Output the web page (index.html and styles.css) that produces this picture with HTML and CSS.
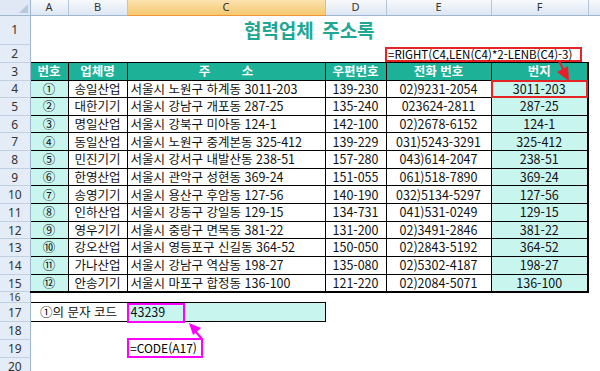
FILE: index.html
```html
<!DOCTYPE html>
<html lang="ko">
<head>
<meta charset="utf-8">
<title>협력업체 주소록</title>
<link rel="stylesheet" href="styles.css">
</head>
<body>
<div class="sheet">
<table class="grid">
<colgroup><col class="c-rh"><col class="c-a"><col class="c-b"><col class="c-c"><col class="c-d"><col class="c-e"><col class="c-f"><col class="c-g"></colgroup>
<tr class="hdr"><th class="corner"><span class="tri"></span></th><th>A</th><th>B</th><th class="sel">C</th><th>D</th><th>E</th><th>F</th><th></th></tr>
<tr class="r1"><th class="rh">1</th><td colspan="6" class="title">협력업체 주소록</td><td></td></tr>
<tr class="r2"><th class="rh">2</th><td colspan="6"></td><td></td></tr>
<tr class="r3 t"><th class="rh">3</th><td class="h first">번호</td><td class="h">업체명</td><td class="h">주&nbsp;&nbsp;&nbsp;&nbsp;&nbsp;&nbsp;&nbsp;&nbsp;&nbsp;소</td><td class="h">우편번호</td><td class="h">전화 번호</td><td class="h last">번지</td><td class="g"></td></tr>
<tr class="d t"><th class="rh">4</th><td class="no first">①</td><td class="cn">송일산업</td><td class="ad">서울시 노원구 하계동 3011-203</td><td class="cn">139-230</td><td class="cn">02)9231-2054</td><td class="bj last sel-red">3011-203</td><td class="g"></td></tr>
<tr class="d t"><th class="rh">5</th><td class="no first">②</td><td class="cn">대한기기</td><td class="ad">서울시 강남구 개포동 287-25</td><td class="cn">135-240</td><td class="cn">023624-2811</td><td class="bj last">287-25</td><td class="g"></td></tr>
<tr class="d t"><th class="rh">6</th><td class="no first">③</td><td class="cn">명일산업</td><td class="ad">서울시 강북구 미아동 124-1</td><td class="cn">142-100</td><td class="cn">02)2678-6152</td><td class="bj last">124-1</td><td class="g"></td></tr>
<tr class="d t"><th class="rh">7</th><td class="no first">④</td><td class="cn">동일산업</td><td class="ad">서울시 노원구 중계본동 325-412</td><td class="cn">139-229</td><td class="cn">031)5243-3291</td><td class="bj last">325-412</td><td class="g"></td></tr>
<tr class="d t"><th class="rh">8</th><td class="no first">⑤</td><td class="cn">민진기기</td><td class="ad">서울시 강서구 내발산동 238-51</td><td class="cn">157-280</td><td class="cn">043)614-2047</td><td class="bj last">238-51</td><td class="g"></td></tr>
<tr class="d t"><th class="rh">9</th><td class="no first">⑥</td><td class="cn">한영산업</td><td class="ad">서울시 관악구 성현동 369-24</td><td class="cn">151-055</td><td class="cn">061)518-7890</td><td class="bj last">369-24</td><td class="g"></td></tr>
<tr class="d t"><th class="rh">10</th><td class="no first">⑦</td><td class="cn">송영기기</td><td class="ad">서울시 용산구 후암동 127-56</td><td class="cn">140-190</td><td class="cn">032)5134-5297</td><td class="bj last">127-56</td><td class="g"></td></tr>
<tr class="d t"><th class="rh">11</th><td class="no first">⑧</td><td class="cn">인하산업</td><td class="ad">서울시 강동구 강일동 129-15</td><td class="cn">134-731</td><td class="cn">041)531-0249</td><td class="bj last">129-15</td><td class="g"></td></tr>
<tr class="d t"><th class="rh">12</th><td class="no first">⑨</td><td class="cn">영우기기</td><td class="ad">서울시 중랑구 면목동 381-22</td><td class="cn">131-200</td><td class="cn">02)3491-2846</td><td class="bj last">381-22</td><td class="g"></td></tr>
<tr class="d t"><th class="rh">13</th><td class="no first">⑩</td><td class="cn">강오산업</td><td class="ad">서울시 영등포구 신길동 364-52</td><td class="cn">150-050</td><td class="cn">02)2843-5192</td><td class="bj last">364-52</td><td class="g"></td></tr>
<tr class="d t"><th class="rh">14</th><td class="no first">⑪</td><td class="cn">가나산업</td><td class="ad">서울시 강남구 역삼동 198-27</td><td class="cn">135-080</td><td class="cn">02)5302-4187</td><td class="bj last">198-27</td><td class="g"></td></tr>
<tr class="d t lastrow"><th class="rh">15</th><td class="no first">⑫</td><td class="cn">안송기기</td><td class="ad">서울시 마포구 합정동 136-100</td><td class="cn">121-220</td><td class="cn">02)2084-5071</td><td class="bj last">136-100</td><td class="g"></td></tr>
<tr class="r16"><th class="rh small">16</th><td colspan="6"></td><td></td></tr>
<tr class="r17"><th class="rh">17</th><td colspan="2" class="lbl">①의 문자 코드</td><td class="code">43239</td><td colspan="3"></td><td></td></tr>
<tr class="r18"><th class="rh">18</th><td colspan="6"></td><td></td></tr>
<tr class="r19"><th class="rh">19</th><td colspan="6"></td><td></td></tr>
<tr class="r20"><th class="rh">20</th><td colspan="6"></td><td></td></tr>
</table>

<div class="formula-box">=RIGHT(C4,LEN(C4)*2-LENB(C4)-3)</div>
<div class="code-mark"></div>
<div class="code-box">=CODE(A17)</div>

<svg class="arrows" width="600" height="371" viewBox="0 0 600 371">
  <line x1="559" y1="61" x2="564" y2="71" stroke="#e8202a" stroke-width="2"/>
  <polygon points="569,81 557,72 568,66" fill="#e8202a"/>
  <line x1="202" y1="339" x2="195" y2="331" stroke="#ff00ff" stroke-width="2"/>
  <polygon points="189,323 201,328 193,335" fill="#ff00ff"/>
</svg>
</div>
</body>
</html>
```

FILE: styles.css
```css
* { box-sizing: border-box; }
html, body { margin: 0; padding: 0; background: #fff; }
body {
  width: 600px;
  height: 371px;
  overflow: hidden;
  font-family: "Noto Sans CJK KR", "Noto Sans", sans-serif;
}
.sheet { position: relative; width: 600px; height: 371px; overflow: hidden; }

.grid {
  border-collapse: collapse;
  table-layout: fixed;
  width: 612px;
}
.c-rh { width: 30px; }
.c-a { width: 38px; }
.c-b { width: 59px; }
.c-c { width: 198px; }
.c-d { width: 61px; }
.c-e { width: 105px; }
.c-f { width: 97px; }
.c-g { width: 24px; }

.grid th, .grid td {
  padding: 0;
  white-space: nowrap;
  font-size: 12.5px;
  line-height: 1;
  vertical-align: middle;
}

/* column header */
.hdr { height: 15px; }
.grid .hdr th {
  font-family: "Noto Sans", sans-serif;
  font-weight: normal;
  font-size: 11px;
  line-height: 12px;
  color: #333;
  background: linear-gradient(#f7f9fc, #dde6f2);
  border-right: 1px solid #b4c6da;
  border-bottom: 1px solid #9eb6ce;
}
.grid .hdr th.sel {
  background: linear-gradient(#fbe2b0, #f5c86e);
  border-bottom: 1px solid #f29536;
  border-right: 1px solid #f0b860;
}
.grid .hdr th.corner {
  position: relative;
  background: #dfe8f4;
  border-right: 1px solid #9eb6ce;
}
.tri {
  position: absolute;
  right: 2px;
  bottom: 2px;
  width: 0;
  height: 0;
  border-left: 9px solid transparent;
  border-bottom: 9px solid #b8c9dc;
}

/* row header */
.grid .rh {
  font-family: "Noto Sans", sans-serif;
  font-weight: normal;
  font-size: 12px;
  line-height: 11px;
  color: #333;
  background: #e4ecf7;
  border-right: 1px solid #9eb6ce;
  border-bottom: 1px solid #c0d0e2;
  text-align: center;
}
.grid .rh.small { font-size: 10px; line-height: 8px; }

/* row heights */
.r1 { height: 29px; }
.r2 { height: 18px; }
.r3 { height: 18px; }
.d { height: 17.67px; }
.r16 { height: 11px; }
.r17 { height: 19px; }
.r18 { height: 18px; }
.r19 { height: 18px; }
.r20 { height: 18px; }

.grid .title {
  text-align: center;
  font-size: 19px;
  font-weight: bold;
  color: #1ea893;
  word-spacing: 3px;
}

/* table */
.t td { border: 1px solid #000; }
.t td.g { border: none; border-left: 1px solid #000; }
.t td.last { border-right: 2px solid #000; }
.t.lastrow td { border-bottom: 2px solid #000; }
.t.lastrow td.g { border-bottom: none; }

.grid .h {
  background: #1db198;
  color: #fff;
  font-weight: bold;
  text-align: center;
}
.no {
  background: #c9f5ef;
  text-align: center;
  color: #111;
}
.cn { text-align: center; color: #111; }
.grid .ad { text-align: left; padding-left: 3px; color: #111; }
.bj { background: #c9f5ef; text-align: center; color: #111; }
.sel-red { outline: 2px solid #e52525; outline-offset: -2px; }

/* row 17 */
.r17 td.lbl {
  text-align: center;
  border-top: 1px solid #000;
  border-bottom: 1px solid #000;
  color: #111;
}
.grid .r17 td.code {
  background: #c9f5ef;
  border: 1px solid #000;
  padding-left: 3px;
  color: #111;
}

/* floating shapes */
.formula-box {
  position: absolute;
  left: 385px;
  top: 47px;
  width: 197px;
  height: 15px;
  border: 2px solid #e52525;
  background: #fff;
  font-size: 11.5px;
  line-height: 11px;
  padding-left: 1px;
  color: #000;
  white-space: nowrap;
}
.code-mark {
  position: absolute;
  left: 127px;
  top: 303px;
  width: 58px;
  height: 20px;
  border: 2px solid #ff00ff;
}
.code-box {
  position: absolute;
  left: 127px;
  top: 338px;
  width: 76px;
  height: 20px;
  border: 2px solid #ff00ff;
  background: #fff;
  font-size: 12px;
  line-height: 16px;
  padding-left: 1px;
  color: #000;
  white-space: nowrap;
}
.arrows {
  position: absolute;
  left: 0;
  top: 0;
  pointer-events: none;
}
```
